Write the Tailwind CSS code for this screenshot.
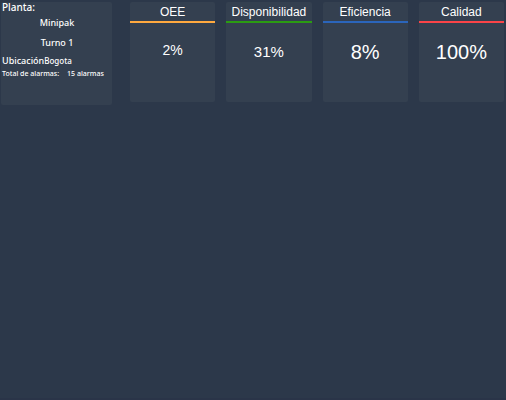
<!DOCTYPE html>
<html lang="es">
<head>
<meta charset="utf-8">
<meta name="viewport" content="width=device-width, initial-scale=1">
<title>OEE</title>
<script src="https://cdn.jsdelivr.net/npm/@tailwindcss/browser@4"></script>
</head>
<body class="min-h-screen bg-[#2c384a] border-b-2 border-[#2a3448] text-white font-['Liberation_Sans',Arial,sans-serif]">
<main class="flex items-start gap-[18px] pt-[2px] pl-px pr-[2px]">
  <section class="w-[111px] shrink-0 min-h-[103px] rounded-xs bg-[#344050] pl-px font-['Noto_Sans',sans-serif] font-medium whitespace-nowrap">
    <h1 class="text-[10px] leading-[11px] font-medium">Planta:</h1>
    <p class="text-[9px] leading-5 text-center">Minipak</p>
    <p class="text-[9px] leading-5 text-center">Turno 1</p>
    <p class="flex items-baseline pt-[2px] text-[9px] leading-3"><span>Ubicación</span><span class="text-[8px]">Bogota</span></p>
    <p class="flex gap-2 text-[7px] leading-[13px]"><span>Total de alarmas:</span><span>15 alarmas</span></p>
  </section>
  <div class="grid grow grid-cols-4 gap-[11px] text-center">
    <section class="min-h-[100px] rounded-xs bg-[#344050]">
      <h2 class="h-[21px] border-b-2 border-[#ffa93f] text-xs leading-5">OEE</h2>
      <p class="pt-[15px] text-sm leading-6">2%</p>
    </section>
    <section class="min-h-[100px] rounded-xs bg-[#344050]">
      <h2 class="h-[21px] border-b-2 border-[#2b9c12] text-xs leading-5">Disponibilidad</h2>
      <p class="pt-[17px] text-[15px] leading-6">31%</p>
    </section>
    <section class="min-h-[100px] rounded-xs bg-[#344050]">
      <h2 class="h-[21px] border-b-2 border-[#2b65bb] text-xs leading-5">Eficiencia</h2>
      <p class="pt-[17px] text-xl leading-6">8%</p>
    </section>
    <section class="min-h-[100px] rounded-xs bg-[#344050]">
      <h2 class="h-[21px] border-b-2 border-[#fb4448] text-xs leading-5">Calidad</h2>
      <p class="pt-[17px] text-xl leading-6">100%</p>
    </section>
  </div>
</main>
</body>
</html>
